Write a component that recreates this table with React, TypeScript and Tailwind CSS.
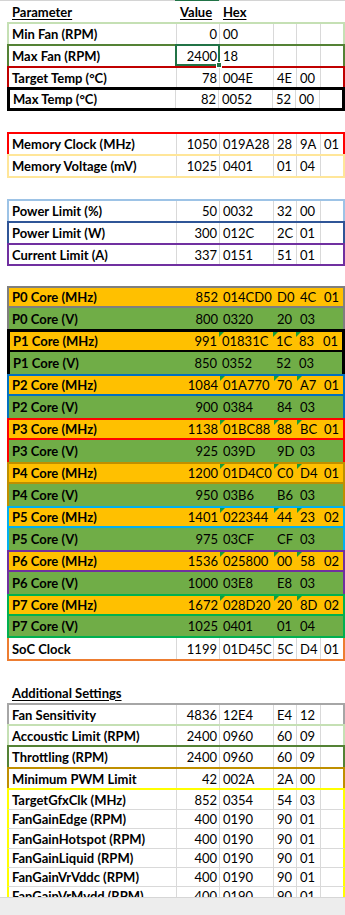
import React from "react";

type R = {
  cls: string;
  label?: React.ReactNode;
  v?: string;
  hex?: string;
  d?: string;
  e?: string;
  f?: string;
  grid?: boolean;
  tri?: boolean;
  sel?: boolean;
};

const GL = "border-r border-[#d9d9d9]";

function Tri() {
  return (
    <span className="absolute left-0 top-0 h-0 w-0 border-t-[5px] border-r-[5px] border-t-[#169c3c] border-r-transparent" />
  );
}

function SelBox() {
  return (
    <span className="absolute -left-[2px] -top-[2px] h-[22px] w-[45px] border-2 border-[#217346]">
      <span className="absolute -bottom-[4px] -right-[4px] h-[6px] w-[6px] border border-white bg-[#217346]" />
    </span>
  );
}

function Row({ cls, label, v, hex, d, e, f, grid, tri, sel }: R) {
  const g = grid ? GL : "";
  return (
    <div className={"flex w-[338px] text-[13px] leading-[16px] text-black " + cls}>
      <div className={"flex min-w-0 flex-1 items-center whitespace-nowrap pl-[3px] font-bold " + g}>{label}</div>
      <div className={"relative flex w-[43px] shrink-0 items-center justify-end pr-[2px] " + g}>
        {v}
        {sel && <SelBox />}
      </div>
      <div className={"relative flex w-[54px] shrink-0 items-center pl-[3px] " + g}>
        {tri && <Tri />}
        {hex}
      </div>
      <div className={"relative flex w-[23px] shrink-0 items-center pl-[3px] " + g}>
        {tri && <Tri />}
        {d}
      </div>
      <div className={"relative flex w-[24px] shrink-0 items-center pl-[3px] " + g}>
        {tri && <Tri />}
        {e}
      </div>
      <div className="flex w-[22px] shrink-0 items-center pl-[3px]">{f}</div>
    </div>
  );
}

const rows: R[] = [
  { cls: "h-[22px] border-t-2 border-x-2 border-[#c5e0b4]", label: "Min Fan (RPM)", v: "0", hex: "00", grid: true },
  { cls: "h-[22px] border-t-2 border-x-2 border-[#548235]", label: "Max Fan (RPM)", v: "2400", hex: "18", grid: true, sel: true },
  { cls: "h-[21px] border-t-2 border-x-2 border-[#c00000]", label: "Target Temp (°C)", v: "78", hex: "004E", d: "4E", e: "00", grid: true },
  { cls: "h-[24px] border-[3px] border-black", label: "Max Temp (°C)", v: "82", hex: "0052", d: "52", e: "00", grid: true },
  { cls: "h-[21px] border-x-2 border-transparent" },
  { cls: "h-[22px] border-t-2 border-x-2 border-[#ff0000]", label: "Memory Clock (MHz)", v: "1050", hex: "019A28", d: "28", e: "9A", f: "01", grid: true },
  { cls: "h-[24px] border-2 border-[#ffe699]", label: "Memory Voltage (mV)", v: "1025", hex: "0401", d: "01", e: "04", grid: true },
  { cls: "h-[21px] border-x-2 border-transparent" },
  { cls: "h-[22px] border-t-2 border-x-2 border-[#9dc3e6]", label: "Power Limit (%)", v: "50", hex: "0032", d: "32", e: "00", grid: true },
  { cls: "h-[22px] border-t-2 border-x-2 border-[#2f5597]", label: "Power Limit (W)", v: "300", hex: "012C", d: "2C", e: "01", grid: true },
  { cls: "h-[23px] border-2 border-[#7030a0]", label: "Current Limit (A)", v: "337", hex: "0151", d: "51", e: "01", grid: true },
  { cls: "h-[20px] border-x-2 border-transparent" },
  { cls: "h-[22px] border-2 border-[#7f7f7f] bg-[#ffc000]", label: "P0 Core (MHz)", v: "852", hex: "014CD0", d: "D0", e: "4C", f: "01" },
  { cls: "h-[21px] border-x-2 border-[#7f7f7f] bg-[#70ad47]", label: "P0 Core (V)", v: "800", hex: "0320", d: "20", e: "03" },
  { cls: "h-[23px] border-x-[3px] border-t-[3px] border-b-2 border-black bg-[#ffc000]", label: "P1 Core (MHz)", v: "991", hex: "01831C", d: "1C", e: "83", f: "01", tri: true },
  { cls: "h-[22px] border-x-[3px] border-black bg-[#70ad47]", label: "P1 Core (V)", v: "850", hex: "0352", d: "52", e: "03" },
  { cls: "h-[22px] border-2 border-[#0070c0] bg-[#ffc000]", label: "P2 Core (MHz)", v: "1084", hex: "01A770", d: "70", e: "A7", f: "01", tri: true },
  { cls: "h-[22px] border-x-2 border-[#0070c0] bg-[#70ad47]", label: "P2 Core (V)", v: "900", hex: "0384", d: "84", e: "03" },
  { cls: "h-[22px] border-2 border-[#ff0000] bg-[#ffc000]", label: "P3 Core (MHz)", v: "1138", hex: "01BC88", d: "88", e: "BC", f: "01", tri: true },
  { cls: "h-[22px] border-x-2 border-[#ff0000] bg-[#70ad47]", label: "P3 Core (V)", v: "925", hex: "039D", d: "9D", e: "03" },
  { cls: "h-[22px] border-2 border-[#bf8f00] bg-[#ffc000]", label: "P4 Core (MHz)", v: "1200", hex: "01D4C0", d: "C0", e: "D4", f: "01", tri: true },
  { cls: "h-[22px] border-x-2 border-[#bf8f00] bg-[#70ad47]", label: "P4 Core (V)", v: "950", hex: "03B6", d: "B6", e: "03" },
  { cls: "h-[22px] border-2 border-[#00b0f0] bg-[#ffc000]", label: "P5 Core (MHz)", v: "1401", hex: "022344", d: "44", e: "23", f: "02", tri: true },
  { cls: "h-[22px] border-x-2 border-[#00b0f0] bg-[#70ad47]", label: "P5 Core (V)", v: "975", hex: "03CF", d: "CF", e: "03" },
  { cls: "h-[22px] border-2 border-[#7030a0] bg-[#ffc000]", label: "P6 Core (MHz)", v: "1536", hex: "025800", d: "00", e: "58", f: "02", tri: true },
  { cls: "h-[22px] border-x-2 border-[#7030a0] bg-[#70ad47]", label: "P6 Core (V)", v: "1000", hex: "03E8", d: "E8", e: "03" },
  { cls: "h-[22px] border-2 border-[#00b050] bg-[#ffc000]", label: "P7 Core (MHz)", v: "1672", hex: "028D20", d: "20", e: "8D", f: "02", tri: true },
  { cls: "h-[22px] border-x-2 border-b-2 border-[#00b050] bg-[#70ad47]", label: "P7 Core (V)", v: "1025", hex: "0401", d: "01", e: "04" },
  { cls: "h-[23px] border-x-2 border-b-2 border-[#ed7d31]", label: "SoC Clock", v: "1199", hex: "01D45C", d: "5C", e: "D4", f: "01", grid: true },
  { cls: "h-[21px] border-x-2 border-transparent" },
  {
    cls: "h-[21px] border-x-2 border-transparent",
    label: <span className="underline underline-offset-[2px]">Additional Settings</span>,
  },
  { cls: "h-[21px] border-t-2 border-x-2 border-[#a6a6a6]", label: "Fan Sensitivity", v: "4836", hex: "12E4", d: "E4", e: "12", grid: true },
  { cls: "h-[21px] border-t-2 border-x-2 border-[#c5e0b4]", label: "Accoustic Limit (RPM)", v: "2400", hex: "0960", d: "60", e: "09", grid: true },
  { cls: "h-[22px] border-t-2 border-x-2 border-[#548235]", label: "Throttling (RPM)", v: "2400", hex: "0960", d: "60", e: "09", grid: true },
  { cls: "h-[21px] border-t-2 border-x-2 border-[#bf8f00]", label: "Minimum PWM Limit", v: "42", hex: "002A", d: "2A", e: "00", grid: true },
  { cls: "h-[21px] border-t-2 border-x-2 border-[#ffff00]", label: "TargetGfxClk (MHz)", v: "852", hex: "0354", d: "54", e: "03", grid: true },
  { cls: "h-[19px] border-t border-t-[#d9d9d9] border-x-2 border-x-[#ffff00]", label: "FanGainEdge (RPM)", v: "400", hex: "0190", d: "90", e: "01", grid: true },
  { cls: "h-[20px] border-t border-t-[#d9d9d9] border-x-2 border-x-[#ffff00]", label: "FanGainHotspot (RPM)", v: "400", hex: "0190", d: "90", e: "01", grid: true },
  { cls: "h-[19px] border-t border-t-[#d9d9d9] border-x-2 border-x-[#ffff00]", label: "FanGainLiquid (RPM)", v: "400", hex: "0190", d: "90", e: "01", grid: true },
  { cls: "h-[19px] border-t border-t-[#d9d9d9] border-x-2 border-x-[#ffff00]", label: "FanGainVrVddc (RPM)", v: "400", hex: "0190", d: "90", e: "01", grid: true },
  { cls: "h-[19px] border-t border-t-[#d9d9d9] border-x-2 border-x-[#ffff00]", label: "FanGainVrMvdd (RPM)", v: "400", hex: "0190", d: "90", e: "01", grid: true },
];

export default function App() {
  return (
    <div className="flex h-[915px] w-[345px] flex-col overflow-hidden bg-white font-['Lato',sans-serif]">
      <div className="min-h-0 flex-1 overflow-hidden">
        <div className="flex h-px w-full">
          <div className="w-[175px] bg-[#d4d4d4]" />
          <div className="w-[44px] bg-[#217346]" />
          <div className="flex-1 bg-[#d4d4d4]" />
        </div>
        <div className="pl-[7px]">
          <div className="flex h-[21px] w-[338px] border-x-2 border-transparent text-[13px] font-bold leading-[16px] text-black">
            <div className="flex min-w-0 flex-1 items-center pl-[3px]">
              <span className="underline underline-offset-[2px]">Parameter</span>
            </div>
            <div className="flex w-[43px] shrink-0 items-center pl-[3px]">
              <span className="underline underline-offset-[2px]">Value</span>
            </div>
            <div className="flex w-[54px] shrink-0 items-center pl-[3px]">
              <span className="underline underline-offset-[2px]">Hex</span>
            </div>
            <div className="w-[23px] shrink-0" />
            <div className="w-[24px] shrink-0" />
            <div className="w-[22px] shrink-0" />
          </div>
          {rows.map((r, i) => (
            <Row key={i} {...r} />
          ))}
        </div>
      </div>
      <div className="h-[18px] shrink-0 border-t border-[#d6d6d6] bg-[#ededed]" />
    </div>
  );
}
